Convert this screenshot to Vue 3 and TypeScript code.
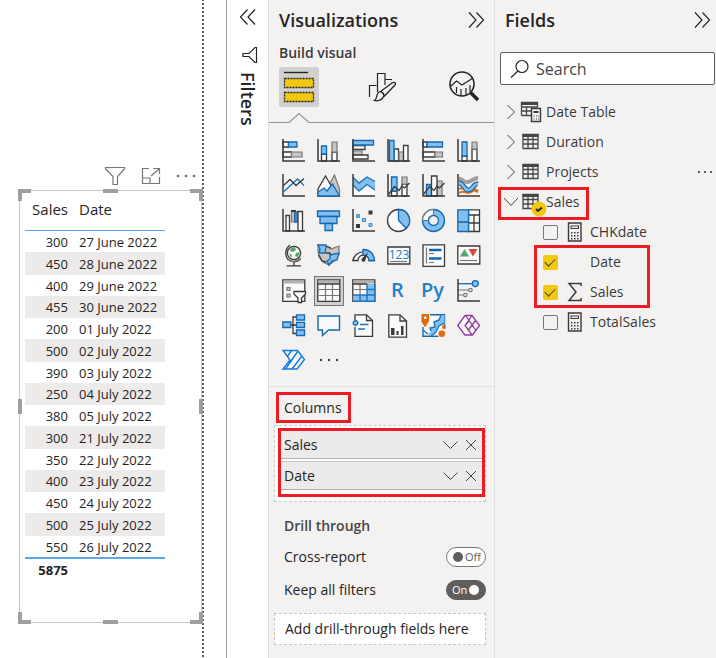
<script setup lang="ts">
import { ref } from 'vue'

type Shape = [kind: string, d: string]
interface VisualIcon {
  name: string
  text?: string
  shapes?: Shape[]
}
interface SalesRow {
  sales: number
  date: string
}

const rect = (x: number, y: number, w: number, h: number): string => `M${x} ${y}h${w}v${h}h${-w}z`
const circle = (cx: number, cy: number, r: number): string =>
  `M${cx - r} ${cy}a${r} ${r} 0 1 0 ${2 * r} 0a${r} ${r} 0 1 0 ${-2 * r} 0z`
const axis: Shape = ['axis', 'M1 0V22H23']

const visuals: VisualIcon[] = [
  { name: 'Stacked bar chart', shapes: [['white', rect(1, 3, 5.5, 5)], ['blue', rect(6.5, 3, 8.5, 5)], ['white', rect(1, 13, 8.5, 5)], ['gray', rect(9.5, 13, 10.5, 5)], axis] },
  { name: 'Stacked column chart', shapes: [['white', rect(4.5, 15, 5, 7)], ['blue', rect(4.5, 7, 5, 8)], ['white', rect(15, 13, 5, 9)], ['gray', rect(15, 3, 5, 10)], axis] },
  { name: 'Clustered bar chart', shapes: [['white', rect(1, 6.5, 12, 4)], ['gray', rect(1, 12, 9, 4)], ['white', rect(1, 16, 15, 4)], ['blue', rect(1, 1.5, 20.5, 4.5)], axis] },
  { name: 'Clustered column chart', shapes: [['white', rect(7, 10, 4.5, 12)], ['gray', rect(12, 13, 4.5, 9)], ['white', rect(16.5, 6.5, 4.5, 15.5)], ['blue', rect(2.5, 1.5, 4.5, 20.5)], axis] },
  { name: '100% stacked bar chart', shapes: [['white', rect(1, 3, 4, 5)], ['blue', rect(5, 3, 15.5, 5)], ['white', rect(1, 13, 12, 5)], ['gray', rect(13, 13, 7.5, 5)], axis] },
  { name: '100% stacked column chart', shapes: [['white', rect(5, 17, 5, 5)], ['blue', rect(5, 3, 5, 14)], ['white', rect(15, 10, 5, 12)], ['gray', rect(15, 3, 5, 7)], axis] },

  { name: 'Line chart', shapes: [['blueline', 'M2 17.5L15.5 5 22 11.5'], ['line', 'M1.5 11.5L8 5.5 14 11.5 22 4.5'], axis] },
  { name: 'Area chart', shapes: [['gray', 'M13 9L17.5 1L22.5 15V22H13z'], ['white', 'M1 15L8.5 2L20 22H1z'], ['blue', 'M1 22V18L7 14L10 17L15.5 10L22.5 22z']] },
  { name: 'Stacked area chart', shapes: [['plain', 'M1 10L7 17L15 10.5L23 16V22H1z'], ['bluefill', 'M1 3.5L7 9L15 3L23 7.5V16L15 10.5L7 17L1 11z'], ['blueline', 'M1 3.5L7 9L15 3L23 7.5M1 11L7 17L15 10.5L23 16'], axis] },
  { name: 'Line and stacked column chart', shapes: [['white', rect(4.5, 17, 5.5, 5)], ['blue', rect(4.5, 3, 5.5, 14)], ['white', rect(15, 10, 5, 12)], ['gray', rect(15, 3, 5, 7)], ['line', 'M1.5 20.5L7.5 12.5L12 16.5L15 12L17.5 14L22.5 9'], axis] },
  { name: 'Line and clustered column chart', shapes: [['blue', rect(4.5, 10.5, 5, 11.5)], ['gray', rect(15, 7, 5, 15)], ['white', rect(9.5, 2, 5.5, 20)], ['line', 'M1.5 20.5L7.5 12.5L12 16.5L15 12L17.5 14L22.5 9'], axis] },
  { name: 'Ribbon chart', shapes: [['orange', 'M2 15C7 12 10 18 13 16S18 14 21 17M2 19C7 15 10 21 14 18S18 17 21 18'], ['grayband', 'M2 4.5C6 5 7 9 11 8S17 4 21 4'], ['blueband', 'M2 9C7 9 7 17 12 16S16 9 21 10'], ['bluecore', 'M2 9C7 9 7 17 12 16S16 9 21 10'], axis] },

  { name: 'Waterfall chart', shapes: [['white', rect(4, 6.5, 3.5, 15.5)], ['gray', rect(9.5, 1.5, 3, 11.5)], ['darkfill', rect(9, 1, 5, 2)], ['blue', rect(13, 3, 2, 10)], ['white', rect(16, 2.5, 4.5, 19.5)], axis] },
  { name: 'Funnel', shapes: [['blue', rect(0.5, 2, 22, 5.5)], ['blue', rect(3, 7.5, 17, 7)], ['blue', rect(8, 14.5, 7.5, 7)]] },
  { name: 'Scatter chart', shapes: [['darkfill', rect(16.5, 1.5, 4, 4)], ['darkfill', rect(4, 15, 4, 4)], ['dot', rect(4.5, 5.5, 3, 3)], ['dot', rect(10.5, 9.5, 3, 3)], ['dot', rect(17, 14.5, 3, 3)], axis] },
  { name: 'Pie chart', shapes: [['white', circle(11.5, 11.5, 11)], ['blue', 'M11.5 .5A11 11 0 0 1 19.3 19.3L11.5 11.5z']] },
  { name: 'Donut chart', shapes: [['blue', circle(11.5, 11.5, 11)], ['lightgray', 'M11.5 .5A11 11 0 0 0 .5 11.5H6.5A5 5 0 0 1 11.5 6.5z'], ['hub', circle(11.5, 11.5, 5)]] },
  { name: 'Treemap', shapes: [['white', rect(11.5, 0.8, 11, 21.7)], ['line', 'M12 6H22.5M12 14H22.5M17 6V22'], ['blue', rect(0.8, 0.8, 10.7, 12.4)], ['blue', rect(0.8, 13.2, 10.7, 9.3)]] },

  { name: 'Map', shapes: [['white', circle(12, 9, 6.6)], ['green', 'M9 4L13 3L14 6L11 8L8 7zM14 9L18 8L16 13L13 12zM7 9L10 11L9 14z'], ['line', 'M8 1A10 10 0 0 0 6 15.5Q12 20 18.5 15.5M12 18V21.5M4.5 21.8H19'], ['grayline', 'M7 16.5Q13 19.5 19 14']] },
  { name: 'Filled map', shapes: [['gray', 'M1 1L9 2L14 5L22 2V10L17 17L12 21L6 18L2 13L1 7z'], ['blue', 'M1 1H9V4L8 9H2L3 5z'], ['blue', 'M13 11L22 9L20 16L15 17L12 21L10 17L13 15z'], ['line', 'M9 9H13V11M2 11L5 17L9 18M9 2L14 4']] },
  { name: 'Gauge', shapes: [['white', 'M.8 16.5A11 11 0 0 1 22.3 16.5H17A5.5 5.5 0 0 0 6 16.5z'], ['blue', 'M11 5.5A11 11 0 0 1 22.5 16.5H17A5.5 5.5 0 0 0 11 11z'], ['darkfill', 'M16 8L13.5 15.5A2 2 0 1 1 10.5 14z']] },
  { name: 'Card', text: '123', shapes: [['white', rect(0.8, 3, 22, 17)], ['grayline', 'M3 17.5H20']] },
  { name: 'Multi-row card', shapes: [['white', rect(1, 0.8, 21.5, 21.5)], ['grayline', 'M4.5 3.5V19.5M7 9.5H12M7 18.5H12'], ['bar', 'M7 6H19.5M7 14.5H19.5']] },
  { name: 'KPI', shapes: [['white', rect(0.8, 2, 22, 18)], ['green', 'M3 12.5H12L7.5 5z'], ['red', 'M11.5 5H20.5L16 12.5z'], ['grayline', 'M3 16.5H20']] },

  { name: 'Slicer', shapes: [['white', rect(0.8, 0.8, 22, 21.5)], ['head', rect(1.5, 1.5, 20.5, 3)], ['gray', rect(5, 8.5, 3, 3)], ['gray', rect(5, 15, 3, 3)], ['white', 'M12 12.5H23.5V15L19.5 19V23.5H16V19L12 15z']] },
  { name: 'Table', shapes: [['white', rect(0.8, 0.8, 22, 21.5)], ['head', rect(1.5, 1.5, 20.5, 3)], ['grayline', 'M1.5 10.5H22M1.5 16.5H22M8.5 5V22M15.5 5V22'], ['axis', 'M1 5H22.5']] },
  { name: 'Matrix', shapes: [['white', rect(0.8, 0.8, 22, 21.5)], ['head', rect(1.5, 1.5, 20.5, 3)], ['bluefill', rect(1.5, 16, 21, 6)], ['bluefill', rect(15, 5, 7.5, 17)], ['grayline', 'M1.5 10.5H15M8 5V16'], ['blueline', 'M1 16H22.5M15 5V22M8 16V22M15 10.5H22.5M1 22.3H22.8V5'], ['axis', 'M1 5H15']] },
  { name: 'R script visual', text: 'R' },
  { name: 'Python visual', text: 'Py' },
  { name: 'Key influencers', shapes: [['grayline', 'M1 11H12M1 16H6.5'], ['lightgray', circle(13.5, 11, 1.7)], ['lightgray', circle(8.3, 16, 1.7)], ['blueline', 'M1 4.7H15'], ['blue', circle(18.3, 4.7, 3)], axis] },

  { name: 'Decomposition tree', shapes: [['line', 'M8 11H18M15 3H11V19.5H15'], ['blue', rect(0.8, 8, 8, 5.5)], ['blue', rect(14.5, 0.8, 8, 5.2)], ['blue', rect(14.5, 8.3, 8, 5.2)], ['blue', rect(14.5, 16, 8, 5.5)]] },
  { name: 'Q&A', shapes: [['whiteblue', 'M1 2H22.5V16H11.5L5.5 21.5V16H1z']] },
  { name: 'Smart narrative', shapes: [['white', 'M3 .8H14.5L20.5 6.5V22.3H3V12z'], ['line', 'M14.5 1V6.5H20'], ['bg', rect(0.5, 6, 4, 7)], ['blueline', 'M8 10.5H16.5M6 15H13'], ['blue', circle(3.5, 9, 2.3)]] },
  { name: 'Paginated report', shapes: [['white', 'M1.8 .8H13L19.500 7V23.200H1.800z'], ['line', 'M13 1V7H19.5'], ['darkfill', 'M4 14H7.500V21H4zM9.500 17H11.500V21H9.500zM14 12H16.500V21H14z']] },
  { name: 'ArcGIS Maps', shapes: [['whiteblue', rect(1, 0.8, 21.5, 21.5)], ['bluefill', 'M19 1H22.5V10L17 12L14 18L9 22H5L9 17L8 14L13 13L12 8L17 6z'], ['blueline', 'M22 9L17 12L14 18L9 22M9 17L8 14L13 13L12 8L17 6L19 1M1 16L6 20'], ['bg', rect(-1, -1, 9, 14)], ['pin', 'M-.5 0H7V7L3.2 13.5L-.5 8z'], ['hole', circle(3.2, 3.8, 1.3)], ['bg', circle(20, 19, 5)], ['pin', circle(19.8, 19.8, 3.3)], ['pin', circle(22, 13, 2)]] },
  { name: 'Power Apps', shapes: [['purple', 'M8 1.500H15L22.500 11.500L15.500 21H8L.8 11.500zM8.500 1.500L19 16.500M15 1.500L8 11.500L15 21M18.500 6.500L11 16.500M8 11.500L12 6.500']] },

  { name: 'Power Automate', shapes: [['bright', 'M1 1.500H15.500L22.500 10.500L15 20H1L8 11zM16 2L3.500 20M9.500 1.500L5 8M20 7L10 20']] },
]

const rows: SalesRow[] = [
  { sales: 300, date: '27 June 2022' },
  { sales: 450, date: '28 June 2022' },
  { sales: 400, date: '29 June 2022' },
  { sales: 455, date: '30 June 2022' },
  { sales: 200, date: '01 July 2022' },
  { sales: 500, date: '02 July 2022' },
  { sales: 390, date: '03 July 2022' },
  { sales: 250, date: '04 July 2022' },
  { sales: 380, date: '05 July 2022' },
  { sales: 300, date: '21 July 2022' },
  { sales: 350, date: '22 July 2022' },
  { sales: 400, date: '23 July 2022' },
  { sales: 450, date: '24 July 2022' },
  { sales: 500, date: '25 July 2022' },
  { sales: 550, date: '26 July 2022' },
]
const total = rows.reduce((sum, row) => sum + row.sales, 0)

const handles = ['tl', 'tc', 'tr', 'ml', 'mr', 'bl', 'bc', 'br']
const wells = ref<string[]>(['Sales', 'Date'])
const crossReport = ref(false)
const keepFilters = ref(true)
const search = ref('')
const tables = ['Date Table', 'Duration', 'Projects', 'Sales']
const fields = ref([
  { name: 'CHKdate', kind: 'measure', checked: false },
  { name: 'Date', kind: 'date', checked: true },
  { name: 'Sales', kind: 'sum', checked: true },
  { name: 'TotalSales', kind: 'measure', checked: false },
])
</script>

<template>
  <div class="app">
    <main class="canvas">
      <div class="page">
        <div class="visual-actions">
          <button aria-label="Filters on this visual">
            <svg width="22" height="20" viewBox="0 0 22 20"><path class="action" d="M1.5 1.5H20.5V3L13.5 10.5V18.5H9V10.5L1.5 3z" /></svg>
          </button>
          <button aria-label="Focus mode">
            <svg width="20" height="18" viewBox="0 0 20 18"><path class="action" d="M8 1.5H1.5V16.5H18.5V10M1.5 11H9V16.5M12 1.5H18.5V7M18.5 1.5L10 9" /></svg>
          </button>
          <button aria-label="More options">
            <svg width="20" height="4" viewBox="0 0 20 4"><path class="action-dots" d="M1 1h2v2H1zM9 1h2v2H9zM17 1h2v2h-2z" /></svg>
          </button>
        </div>
        <section class="visual">
          <i v-for="h in handles" :key="h" class="handle" :class="h"></i>
          <table>
            <thead>
              <tr><th scope="col">Sales</th><th scope="col">Date</th></tr>
            </thead>
            <tbody>
              <tr v-for="row in rows" :key="row.date"><td>{{ row.sales }}</td><td>{{ row.date }}</td></tr>
            </tbody>
            <tfoot>
              <tr><td>{{ total }}</td><td></td></tr>
            </tfoot>
          </table>
        </section>
      </div>
    </main>

    <aside class="filters">
      <button aria-label="Expand filters">
        <svg width="18" height="18" viewBox="0 0 18 18"><path class="ink" d="M8.500 1.500L1.500 9l7 7.500M16 1.500L9 9l7 7.500" /></svg>
      </button>
      <svg class="filter-icon" width="18" height="18" viewBox="0 0 18 18"><path class="ink" d="M15.500 1.500V16.500H14L8 10.500H2V7.500H8L14 1.500z" /></svg>
      <h2>Filters</h2>
    </aside>

    <section class="viz">
      <header>
        <h2>Visualizations</h2>
        <button aria-label="Collapse visualizations">
          <svg width="18" height="18" viewBox="0 0 18 18"><path class="ink" d="M2 1.500L9 9l-7 7.500M9.500 1.500L16.500 9l-7 7.500" /></svg>
        </button>
      </header>
      <h3>Build visual</h3>
      <nav class="modes">
        <button class="active" aria-label="Build visual">
          <svg width="32" height="32" viewBox="0 0 32 32">
            <path class="mode-line" d="M1 1.500H25" />
            <path class="mode-well" d="M1.500 7.500H30.500V16.500H1.500zM1.500 21.500H30.500V30.500H1.500z" />
          </svg>
        </button>
        <button aria-label="Format visual">
          <svg width="32" height="32" viewBox="0 0 32 32">
            <path class="ink" d="M3.500 26V14.500H10.500M11.500 21V2.500H19V14M19 8.500H26" />
            <path class="brush" d="M12 22C14 19.500 18 21 18 24.500C17 28.500 12 30.500 8.500 29.500C11 28.500 10 25 12 22zM14.500 20.500L26 12C28.500 10.500 30.500 12 29 14L18.500 25C17.500 22.500 16.500 21.500 14.500 20.500z" />
          </svg>
        </button>
        <button aria-label="Add further analyses">
          <svg width="32" height="32" viewBox="0 0 32 32">
            <circle class="lens" cx="14" cy="13" r="12" />
            <path class="ink" d="M3 15L8.500 10L14 14L25 7M8.500 16V22M13 18V25M18 17V24M22 14V21" />
            <path class="lens-handle" d="M22.500 21.500L30 29" />
          </svg>
        </button>
      </nav>
      <div class="mode-rule">
        <svg width="20" height="11" viewBox="0 0 20 11"><path d="M0 9.500L10 .5L20 9.500V11H0z" /><polyline points="0,9.500 10,0.500 20,9.500" /></svg>
      </div>

      <div class="gallery">
        <button v-for="v in visuals" :key="v.name" :class="{ selected: v.name === 'Table' }" :aria-label="v.name">
          <svg v-if="v.shapes" width="24" height="24" viewBox="0 0 24 24">
            <path v-for="(s, i) in v.shapes" :key="i" :class="s[0]" :d="s[1]" />
          </svg>
          <span v-if="v.text" class="glyph" :class="{ digits: v.text === '123' }">{{ v.text }}</span>
        </button>
        <button aria-label="Get more visuals">
          <svg width="20" height="4" viewBox="0 0 20 4"><path class="darkfill" d="M1 0h2v2H1zM9 0h2v2H9zM17 0h2v2h-2z" /></svg>
        </button>
      </div>

      <div class="build">
        <h4 class="callout">Columns</h4>
        <div class="well">
          <ul class="callout-list">
            <li v-for="w in wells" :key="w">
              <span>{{ w }}</span>
              <button :aria-label="`Options for ${w}`">
                <svg width="16" height="10" viewBox="0 0 16 10"><path class="thin" d="M1.500 1.500L8.500 8.500L15.500 1.500" /></svg>
              </button>
              <button :aria-label="`Remove ${w}`">
                <svg width="12" height="12" viewBox="0 0 12 12"><path class="thin" d="M1 1L11 11M11 1L1 11" /></svg>
              </button>
            </li>
          </ul>
        </div>
        <h4 class="drill">Drill through</h4>
        <label class="option">
          <span>Cross-report</span>
          <span class="switch"><input v-model="crossReport" type="checkbox" /><b>{{ crossReport ? 'On' : 'Off' }}</b></span>
        </label>
        <label class="option">
          <span>Keep all filters</span>
          <span class="switch"><input v-model="keepFilters" type="checkbox" /><b>{{ keepFilters ? 'On' : 'Off' }}</b></span>
        </label>
        <div class="drop">Add drill-through fields here</div>
      </div>
    </section>

    <section class="fields">
      <header>
        <h2>Fields</h2>
        <button aria-label="Collapse fields">
          <svg width="18" height="18" viewBox="0 0 18 18"><path class="ink" d="M2 1.500L9 9l-7 7.500M9.500 1.500L16.500 9l-7 7.500" /></svg>
        </button>
      </header>
      <label class="search">
        <svg width="20" height="20" viewBox="0 0 20 20"><circle class="ink" cx="12" cy="7.500" r="6" /><path class="ink" d="M8 12L1 18.500" /></svg>
        <input v-model="search" type="text" placeholder="Search" aria-label="Search fields" />
      </label>
      <ul class="tree">
        <li v-for="t in tables" :key="t" :class="{ marked: t === 'Sales' }">
          <button class="toggle" :aria-label="`Toggle ${t}`">
            <svg v-if="t === 'Sales'" width="16" height="16" viewBox="0 0 16 16"><path class="thin" d="M1 4L8 11.500L15 4" /></svg>
            <svg v-else width="16" height="16" viewBox="0 0 16 16"><path class="thin" d="M4.500 1L11.500 8L4.500 15" /></svg>
          </button>
          <svg class="table-icon" width="22" height="22" viewBox="0 0 22 22">
            <template v-if="t === 'Date Table'">
              <path class="grid" d="M.5 1.500H16.500V6H.5zM.5 10H10M.5 14.500H10M.5 6V14.500M5.500 6V14.500M11 6V9" />
              <path class="band" d="M0 1H17V4H0z" />
              <path class="calc" d="M10.500 7.500H19.500V20.500H10.500z" />
              <path class="calc-detail" d="M12.500 10H17.500V12H12.500zM12.500 14.500h1v1h-1zM15 14.500h1v1h-1zM17 14.500h1v1h-1zM12.500 17.500h1v1h-1zM15 17.500h1v1h-1zM17 17.500h1v1h-1z" />
            </template>
            <template v-else>
              <path class="grid" d="M2 3.500H17V17.500H2zM2 8.500H17M2 13H17M7 6V17.500M12 6V17.500" />
              <path class="band" d="M1.500 3H17.500V6H1.500z" />
            </template>
          </svg>
          <span class="tree-name">{{ t }}</span>
          <svg v-if="t === 'Sales'" class="badge" width="16" height="16" viewBox="0 0 16 16"><circle cx="8" cy="8" r="7.500" /><path d="M5 8L7 10L11 6.500" /></svg>
          <button v-if="t === 'Projects'" class="more" aria-label="More options">
            <svg width="16" height="4" viewBox="0 0 16 4"><path class="more-dots" d="M1 1h2v2H1zM7 1h2v2H7zM13 1h2v2h-2z" /></svg>
          </button>
        </li>
      </ul>
      <div class="columns">
        <label v-for="f in fields" :key="f.name" class="field">
          <input v-model="f.checked" type="checkbox" />
          <svg width="16" height="20" viewBox="0 0 16 20">
            <template v-if="f.kind === 'measure'">
              <path class="calc" d="M1.500 1H14V19H1.500z" />
              <path class="calc-detail" d="M3.500 3.500H12V4.500H3.500zM3.500 6H12V7H3.500zM3.500 4h1v2.500h-1zM11 4h1v2.500h-1zM4 10h1.500v1.500H4zM7 10h1.500v1.500H7zM10 10h1.500v1.500H10zM4 13h1.500v1.500H4zM7 13h1.500v1.500H7zM10 13h1.500v1.500H10zM4 16h1.500v1.500H4zM7 16h1.500v1.500H7zM10 16h1.500v1.500H10z" />
            </template>
            <path v-else-if="f.kind === 'sum'" class="sigma" d="M14 4V1.500H2L9 10L2 18.500H14V16" />
          </svg>
          <span>{{ f.name }}</span>
        </label>
        <i class="mark"></i>
      </div>
    </section>
  </div>
</template>

<style>
body {
  margin: 0;
  background: #fff;
}
</style>

<style scoped>
.app {
  display: flex;
  min-height: 100vh;
  font: 14px/20px "Open Sans", "Noto Sans", sans-serif;
  color: #252423;
}
h2, h3, h4, ul {
  margin: 0;
  padding: 0;
  list-style: none;
}
h2 {
  font-size: 18px;
  line-height: 24px;
  font-weight: 600;
}
button {
  display: flex;
  align-items: center;
  justify-content: center;
  padding: 0;
  border: 0;
  background: none;
  font: inherit;
  color: inherit;
}
svg {
  display: block;
  flex: none;
  overflow: visible;
}
.ink { fill: none; stroke: #252423; stroke-width: 1.2; }
.thin { fill: none; stroke: #484644; stroke-width: 1; }

.canvas {
  flex: 1;
  min-width: 0;
  padding-right: 22px;
}
.page {
  box-sizing: border-box;
  min-height: 100vh;
  padding: 166px 2px 34px 19px;
  background: repeating-linear-gradient(#fff 0 3px, #605e5c 3px 5px, #fff 5px 7px) right / 2px 4px repeat-y;
  background-image: linear-gradient(#605e5c 50%, #fff 50%);
}
.visual-actions {
  display: flex;
  align-items: center;
  justify-content: flex-end;
  gap: 15px;
  height: 20px;
  padding-right: 6px;
}
.action { fill: none; stroke: #797775; stroke-width: 1.2; }
.action-dots { fill: #797775; stroke: #797775; stroke-width: .5; }
.visual {
  position: relative;
  margin-top: 4px;
  padding: 0 5px 42px;
  border: 1px solid #c8c6c4;
}
.handle {
  position: absolute;
  box-sizing: border-box;
  width: 13px;
  height: 12px;
  border: 0 solid #a19f9d;
}
.tl { top: -2px; left: -2px; border-width: 4px 0 0 4px; }
.tr { top: -2px; right: -2px; border-width: 4px 4px 0 0; }
.bl { bottom: -2px; left: -2px; border-width: 0 0 4px 4px; }
.br { bottom: -2px; right: -2px; border-width: 0 4px 4px 0; }
.tc, .bc { left: calc(50% - 8px); width: 15px; height: 4px; background: #a19f9d; }
.tc { top: -2px; }
.bc { bottom: -2px; }
.ml, .mr { top: calc(50% - 8px); width: 4px; height: 15px; background: #a19f9d; }
.ml { left: -2px; }
.mr { right: -2px; }
table {
  border-collapse: collapse;
  font-size: 13px;
  line-height: 18px;
}
th {
  height: 30px;
  padding: 9px 0 0;
  font-size: 15px;
  font-weight: 400;
  text-align: left;
  vertical-align: top;
}
thead tr { border-bottom: 1px solid #5aa9e6; }
td { height: 21px; padding: 0; }
tbody tr:nth-child(even) { background: #edebe9; }
tbody tr:nth-child(even) td { height: 23px; }
tbody tr:nth-child(4n) td { height: 22px; }
tr > :first-child { min-width: 43px; padding-right: 5px; text-align: right; }
tr > :last-child { min-width: 86px; padding-left: 6px; }
tfoot tr { border-top: 2px solid #5aa9e6; }
tfoot td { font-weight: 700; }

.filters {
  display: flex;
  flex: none;
  flex-direction: column;
  align-items: center;
  box-sizing: border-box;
  width: 42px;
  padding-top: 8px;
  border-left: 1px solid #a19f9d;
}
.filter-icon { margin: 20px 0 8px 4px; }
.filters h2 { writing-mode: vertical-rl; }

header {
  display: flex;
  align-items: center;
  justify-content: space-between;
  height: 40px;
}
.viz, .fields {
  flex: none;
  box-sizing: border-box;
  border-left: 1px solid #e1dfdd;
  background: #f3f2f1;
}
.viz { width: 226px; }
.viz header { padding: 0 9px 0 10px; }
h3 {
  padding: 3px 10px 4px;
  font-size: 14px;
  line-height: 20px;
  font-weight: 600;
  color: #3b3a39;
}
.modes {
  display: flex;
  justify-content: space-between;
  padding: 0 10px;
}
.modes button {
  width: 40px;
  height: 40px;
  border-radius: 2px;
}
.modes .active { background: #d2d0ce; }
.mode-line { fill: none; stroke: #252423; stroke-width: 1.4; }
.mode-well { fill: #f2c811; stroke: #252423; stroke-width: 1.3; stroke-dasharray: 2 1; }
.brush { fill: #f3f2f1; stroke: #252423; stroke-width: 1.3; }
.lens { fill: none; stroke: #252423; stroke-width: 1.6; }
.lens-handle { fill: none; stroke: #252423; stroke-width: 3.5; }
.mode-rule {
  height: 15px;
  border-bottom: 1px solid #979593;
}
.mode-rule svg { margin-left: 20px; padding-top: 6px; }
.mode-rule path { fill: #f3f2f1; }
.mode-rule polyline { fill: none; stroke: #979593; stroke-width: 1.2; }

.gallery {
  display: grid;
  grid-template-columns: repeat(6, 30px);
  gap: 5px;
  padding: 13px 10px 10px;
  border-bottom: 1px solid #e1dfdd;
}
.gallery button { position: relative; height: 30px; }
.gallery .selected { background: #d2d0ce; outline: 1px solid #797775; outline-offset: -1px; }
.glyph {
  padding: 0 3px 2px 0;
  font-size: 20px;
  line-height: 24px;
  font-weight: 600;
  color: #2480c8;
}
.glyph.digits {
  position: absolute;
  inset: 7px 0 auto;
  padding: 0;
  font-size: 12px;
  line-height: 14px;
  font-weight: 400;
}
.axis { fill: none; stroke: #3b3a39; stroke-width: 1.5; }
.line { fill: none; stroke: #3b3a39; stroke-width: 1.3; }
.white { fill: #fafafa; stroke: #3b3a39; stroke-width: 1.3; }
.plain { fill: #fafafa; }
.lightgray { fill: #fafafa; stroke: #797775; stroke-width: 1.2; }
.gray { fill: #c8c6c4; stroke: #797775; stroke-width: 1.2; }
.head { fill: #b3b0ad; }
.grayline { fill: none; stroke: #797775; stroke-width: 1.2; }
.blue { fill: #83beec; stroke: #1268b3; stroke-width: 1.3; }
.bluefill { fill: #83beec; }
.blueline { fill: none; stroke: #1e74bd; stroke-width: 1.4; }
.whiteblue { fill: #fafafa; stroke: #1268b3; stroke-width: 1.4; }
.bar { fill: none; stroke: #1268b3; stroke-width: 2.5; }
.dot { fill: #83beec; stroke: #3a8fd4; stroke-width: 1; }
.darkfill { fill: #3b3a39; }
.bg { fill: #f3f2f1; }
.hub { fill: #f3f2f1; stroke: #1268b3; stroke-width: 1.3; }
.green { fill: #55a66c; }
.red { fill: #e0453e; }
.orange { fill: none; stroke: #dd6b10; stroke-width: 2; }
.grayband { fill: none; stroke: #a19f9d; stroke-width: 4; }
.blueband { fill: none; stroke: #1268b3; stroke-width: 5; }
.bluecore { fill: none; stroke: #83beec; stroke-width: 2.5; }
.pin { fill: #dd6b10; }
.hole { fill: #fff; }
.purple { fill: #fafafa; stroke: #8e3a9d; stroke-width: 1.3; }
.bright { fill: #fafafa; stroke: #0f7ce0; stroke-width: 1.4; }

.build { padding: 5px 8px 13px 5px; }
h4 { font-size: 14px; line-height: 20px; font-weight: 400; }
.callout {
  width: max-content;
  margin: 0 0 2px 2px;
  padding: 3px 6px 2px 5px;
  border: 3px solid #ed1c24;
}
.well {
  padding: 2px 0 4px 3px;
  border: 1px dashed #c8c6c4;
  background: #fff;
}
.callout-list {
  display: grid;
  gap: 3px;
  padding-bottom: 4px;
  border: 3px solid #ed1c24;
}
.callout-list li {
  display: flex;
  align-items: center;
  gap: 7px;
  height: 27px;
  padding: 0 5px 0 3px;
  border-bottom: 1px solid #b3b0ad;
  background: #edebe9;
}
.callout-list li + li { box-shadow: 0 -1px #c8c6c4; }
.callout-list span { flex: 1; }
.drill {
  margin: 14px 10px 4px;
  font-weight: 600;
  color: #484644;
}
.option {
  display: flex;
  align-items: center;
  justify-content: space-between;
  height: 33px;
  padding-left: 10px;
}
.option + .option { margin-bottom: 7px; }
.switch { position: relative; width: 40px; height: 20px; }
.switch input {
  appearance: none;
  display: block;
  box-sizing: border-box;
  width: 40px;
  height: 20px;
  margin: 0;
  padding: 4px 6px;
  border: 1px solid #797775;
  border-radius: 10px;
  background: #fff;
}
.switch input::before {
  content: "";
  display: block;
  width: 10px;
  height: 10px;
  border-radius: 5px;
  background: #605e5c;
}
.switch input:checked { background: #605e5c; border-color: #605e5c; }
.switch input:checked::before { margin-left: auto; background: #fff; }
.switch b {
  position: absolute;
  top: 0;
  right: 5px;
  font-size: 11px;
  font-weight: 400;
  color: #605e5c;
}
.switch input:checked + b { right: auto; left: 6px; color: #fff; }
.drop {
  padding: 5px 10px;
  border: 1px dashed #c8c6c4;
  background: #fff;
}

.fields { width: 222px; }
.fields header { padding: 0 5px 0 10px; }
.search {
  display: flex;
  align-items: center;
  gap: 6px;
  height: 31px;
  margin: 12px 1px 12px 5px;
  padding-left: 9px;
  border: 1px solid #605e5c;
  border-radius: 2px;
  background: #fff;
}
.search input {
  flex: 1;
  min-width: 0;
  padding: 0;
  border: 0;
  outline: 0;
  background: none;
  font: inherit;
  font-size: 16px;
}
.search input::placeholder { color: #484644; opacity: 1; }
.tree li {
  position: relative;
  display: flex;
  align-items: center;
  height: 30px;
  padding: 0 3px 0 8px;
  color: #3b3a39;
}
.toggle { width: 16px; height: 16px; }
.table-icon { margin: 0 3px 0 2px; }
.tree-name { flex: 1; }
.more-dots { fill: #605e5c; }
.grid { fill: none; stroke: #484644; stroke-width: 1.3; }
.band { fill: #484644; }
.calc { fill: #f3f2f1; stroke: #3b3a39; stroke-width: 1.4; }
.calc-detail { fill: #3b3a39; }
.sigma { fill: none; stroke: #3b3a39; stroke-width: 1.5; }
.badge { position: absolute; left: 36px; top: 14px; }
.badge circle { fill: #f2c811; }
.badge path { fill: none; stroke: #252423; stroke-width: 2; }
.marked::after {
  content: "";
  position: absolute;
  box-sizing: border-box;
  inset: 0 auto auto 3px;
  width: 91px;
  height: 33px;
  border: 3px solid #ed1c24;
  pointer-events: none;
}
.columns { position: relative; }
.field {
  display: flex;
  align-items: center;
  height: 30px;
  padding-left: 48px;
  color: #3b3a39;
}
.field input {
  appearance: none;
  box-sizing: border-box;
  width: 15px;
  height: 15px;
  margin: 0 9px 0 0;
  border: 1px solid #797775;
  border-radius: 2px;
}
.field input:checked { border-color: #f2c811; background: #f2c811; }
.field input:checked::before {
  content: "";
  display: block;
  box-sizing: border-box;
  width: 10px;
  height: 6px;
  margin: 2px 1px;
  border: solid #484644;
  border-width: 0 0 1px 1px;
  transform: rotate(-45deg);
}
.field span { margin-left: 7px; }
.mark {
  position: absolute;
  box-sizing: border-box;
  top: 28px;
  left: 39px;
  width: 116px;
  height: 63px;
  border: 3px solid #ed1c24;
  pointer-events: none;
}
</style>
